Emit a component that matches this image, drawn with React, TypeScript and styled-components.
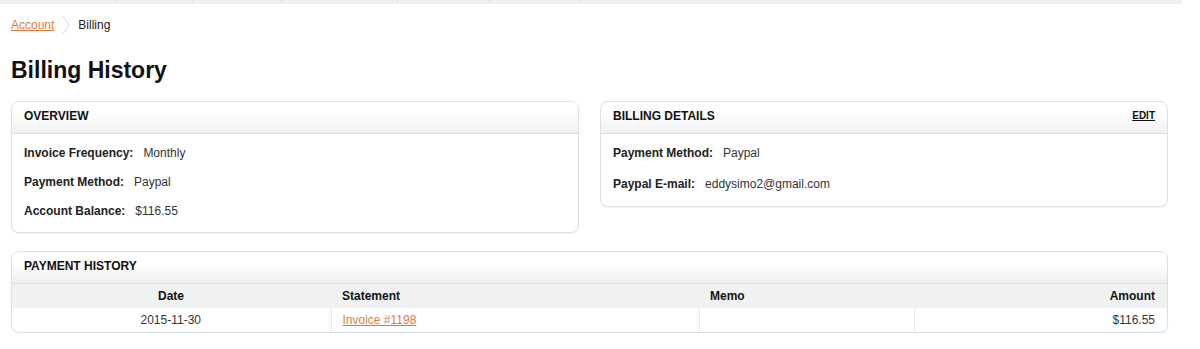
import React from "react";
import styled, { createGlobalStyle } from "styled-components";

const Global = createGlobalStyle`
  html, body { margin: 0; padding: 0; background: #fff; }
  body { font-family: "Liberation Sans", Arial, sans-serif; font-size: 12px; color: #222; }
`;

const Page = styled.div`
  width: 1200px;
`;

const TopNav = styled.div`
  display: flex;
  width: 1182px;
  height: 4px;
  background: #efefef;
`;

const NavTab = styled.div<{ $w: number }>`
  width: ${(p) => p.$w}px;
  height: 4px;
  border-right: 1px solid #e2e2e2;
  box-sizing: border-box;
`;

const Content = styled.div`
  padding: 0 32px 0 11px;
`;

const Crumbs = styled.div`
  display: flex;
  align-items: center;
  height: 20px;
  margin-top: 11px;
  gap: 7px;
`;

const CrumbLink = styled.a`
  color: #df7a3e;
  text-decoration: underline;
  font-size: 12px;
`;

const CrumbCurrent = styled.span`
  color: #222;
  font-size: 12px;
`;

const Title = styled.h1`
  margin: 22px 0 0;
  font-size: 23px;
  line-height: 26px;
  font-weight: bold;
  color: #111;
`;

const Columns = styled.div`
  display: grid;
  grid-template-columns: 568px 568px;
  gap: 21px;
  align-items: start;
  margin-top: 18px;
`;

const Panel = styled.section<{ $mt?: number }>`
  border: 1px solid #d6e2ea;
  border-radius: 8px;
  background: #fff;
  overflow: hidden;
  margin-top: ${(p) => p.$mt ?? 0}px;
  box-shadow: 0 1px 1px rgba(200, 210, 220, 0.25);
`;

const PanelHeader = styled.div`
  display: flex;
  align-items: center;
  justify-content: space-between;
  height: 32px;
  box-sizing: border-box;
  padding: 0 12px 4px;
  background: linear-gradient(#ffffff 35%, #eeeff1);
  border-bottom: 1px solid #d6e2ea;
`;

const PanelTitle = styled.h2`
  margin: 0;
  font-size: 12px;
  font-weight: bold;
  color: #111;
`;

const EditLink = styled.a`
  font-size: 10px;
  font-weight: bold;
  color: #111;
  text-decoration: underline;
`;

const PanelBody = styled.div<{ $gap: number; $pb: number }>`
  display: flex;
  flex-direction: column;
  gap: ${(p) => p.$gap}px;
  padding: 10px 12px ${(p) => p.$pb}px;
`;

const Field = styled.div`
  display: flex;
  align-items: center;
  gap: 10px;
  line-height: 18px;
  font-size: 12px;
`;

const Label = styled.span`
  font-weight: bold;
  color: #222;
`;

const Value = styled.span`
  color: #333;
`;

const Table = styled.table`
  width: 100%;
  border-collapse: collapse;
  font-size: 12px;
`;

const Th = styled.th<{ $align: string; $w?: number }>`
  height: 24px;
  padding: 0 12px 0 11px;
  background: #eff1f3;
  font-weight: bold;
  color: #111;
  text-align: ${(p) => p.$align};
  width: ${(p) => (p.$w ? `${p.$w}px` : "auto")};
  box-sizing: border-box;
`;

const Td = styled.td<{ $align: string }>`
  height: 24px;
  padding: 0 12px 0 11px;
  color: #333;
  text-align: ${(p) => p.$align};
  border-left: 1px solid #e3e9ee;
  &:first-child { border-left: none; }
`;

const Link = styled.a`
  color: #df7a3e;
  text-decoration: underline;
`;

const Chevron = () => (
  <svg width="10" height="20" viewBox="0 0 10 20" aria-hidden>
    <polyline points="2,1 8,10 2,19" fill="none" stroke="#d9dfe4" strokeWidth="1.2" />
  </svg>
);

const tabs = [116, 77, 89, 116, 92, 90];

export default function App() {
  return (
    <Page>
      <Global />
      <TopNav>
        {tabs.map((w, i) => (
          <NavTab key={i} $w={w} />
        ))}
      </TopNav>
      <Content>
        <Crumbs>
          <CrumbLink href="#">Account</CrumbLink>
          <Chevron />
          <CrumbCurrent>Billing</CrumbCurrent>
        </Crumbs>
        <Title>Billing History</Title>
        <Columns>
          <Panel>
            <PanelHeader>
              <PanelTitle>OVERVIEW</PanelTitle>
            </PanelHeader>
            <PanelBody $gap={11} $pb={12}>
              <Field>
                <Label>Invoice Frequency:</Label>
                <Value>Monthly</Value>
              </Field>
              <Field>
                <Label>Payment Method:</Label>
                <Value>Paypal</Value>
              </Field>
              <Field>
                <Label>Account Balance:</Label>
                <Value>$116.55</Value>
              </Field>
            </PanelBody>
          </Panel>
          <Panel>
            <PanelHeader>
              <PanelTitle>BILLING DETAILS</PanelTitle>
              <EditLink href="#">EDIT</EditLink>
            </PanelHeader>
            <PanelBody $gap={13} $pb={13}>
              <Field>
                <Label>Payment Method:</Label>
                <Value>Paypal</Value>
              </Field>
              <Field>
                <Label>Paypal E-mail:</Label>
                <Value>eddysimo2@gmail.com</Value>
              </Field>
            </PanelBody>
          </Panel>
        </Columns>
        <Panel $mt={18}>
          <PanelHeader>
            <PanelTitle>PAYMENT HISTORY</PanelTitle>
          </PanelHeader>
          <Table>
            <thead>
              <tr>
                <Th $align="center" $w={319}>Date</Th>
                <Th $align="left" $w={368}>Statement</Th>
                <Th $align="left" $w={215}>Memo</Th>
                <Th $align="right">Amount</Th>
              </tr>
            </thead>
            <tbody>
              <tr>
                <Td $align="center">2015-11-30</Td>
                <Td $align="left">
                  <Link href="#">Invoice #1198</Link>
                </Td>
                <Td $align="left"></Td>
                <Td $align="right">$116.55</Td>
              </tr>
            </tbody>
          </Table>
        </Panel>
      </Content>
    </Page>
  );
}
